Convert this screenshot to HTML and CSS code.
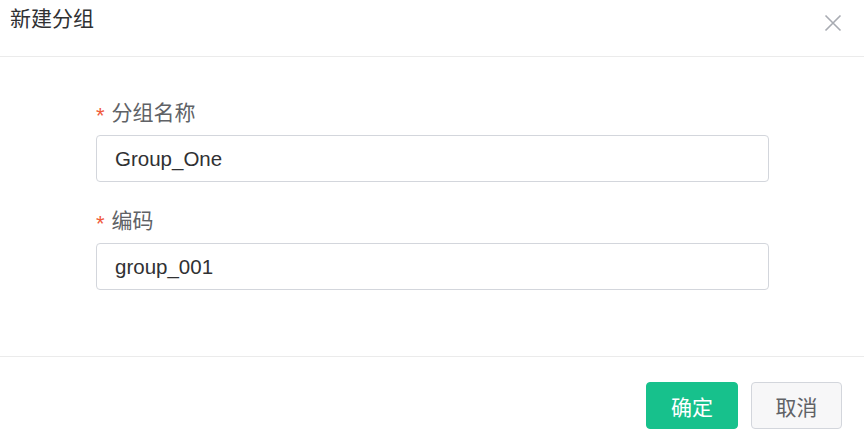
FILE: index.html
```html
<!DOCTYPE html>
<html lang="zh">
<head>
<meta charset="utf-8">
<title>新建分组</title>
<link rel="stylesheet" href="styles.css">
</head>
<body>
<div class="dialog">
  <div class="dialog-header">
    <span class="dialog-title">新建分组</span>
    <button class="dialog-close" aria-label="关闭">
      <svg width="18" height="18" viewBox="0 0 18 18"><path d="M1.5 1.5 L16.5 16.5 M16.5 1.5 L1.5 16.5" stroke="#a8abb2" stroke-width="1.6" fill="none"/></svg>
    </button>
  </div>
  <div class="dialog-body">
    <div class="form-item">
      <label class="form-label"><span class="req">*</span>分组名称</label>
      <div class="input">Group_One</div>
    </div>
    <div class="form-item">
      <label class="form-label"><span class="req">*</span>编码</label>
      <div class="input">group_001</div>
    </div>
  </div>
  <div class="dialog-footer">
    <button class="btn btn-primary">确定</button>
    <button class="btn btn-default">取消</button>
  </div>
</div>
</body>
</html>
```

FILE: styles.css
```css
* { box-sizing: border-box; }
html, body { margin: 0; padding: 0; background: #fff; }
body {
  font-family: "Liberation Sans", "Noto Sans CJK SC", sans-serif;
  color: #606266;
}
.dialog { width: 864px; height: 439px; display: flex; flex-direction: column; }
.dialog-header {
  height: 57px;
  border-bottom: 1px solid #ebebeb;
  display: flex;
  align-items: flex-start;
  justify-content: space-between;
  padding: 5px 22px 0 10px;
}
.dialog-title { font-size: 21px; line-height: 28px; color: #303133; }
.dialog-close {
  border: 0; background: none; padding: 0; margin-top: 9px;
  width: 18px; height: 18px; display: block; cursor: pointer;
}
.dialog-close svg { display: block; }
.dialog-body {
  height: 300px;
  border-bottom: 1px solid #ebebeb;
  padding: 42px 0 0 96px;
}
.form-item { width: 673px; margin-bottom: 25px; }
.form-label {
  display: block;
  font-size: 21px;
  line-height: 28px;
  height: 28px;
  margin-bottom: 8px;
  color: #606266;
}
.req {
  color: #f05a3c;
  margin-right: 7px;
  font-size: 22px;
  vertical-align: -3px;
}
.input {
  height: 47px;
  border: 1px solid #d3d6dc;
  border-radius: 4px;
  padding: 0 18px;
  font-size: 20.5px;
  line-height: 45px;
  color: #303133;
}
.dialog-footer {
  flex: 1;
  display: flex;
  justify-content: flex-end;
  align-items: flex-start;
  gap: 13px;
  padding: 25px 22px 0 0;
}
.btn {
  width: 92px; height: 47px;
  border-radius: 4px;
  font-family: "Liberation Sans", "Noto Sans CJK SC", sans-serif;
  font-size: 21px;
  cursor: pointer;
}
.btn-primary { background: #17c18c; border: 1px solid #17c18c; color: #fff; }
.btn-default { background: #f7f7f8; border: 1px solid #d3d6dc; color: #606266; width: 91px; }
```
